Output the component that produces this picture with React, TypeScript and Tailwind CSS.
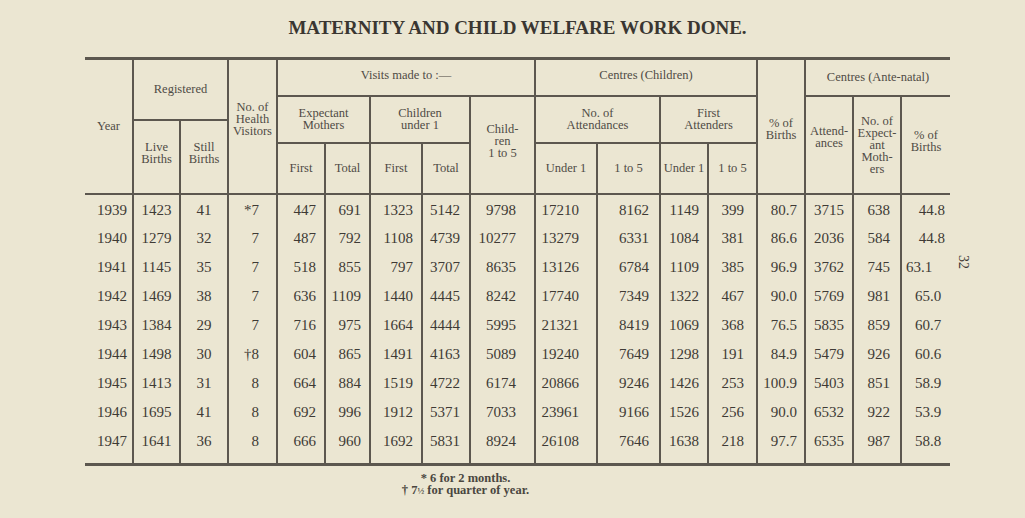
const rows: (string | number)[][] = [
  [1939, 1423, 41, "*7", 447, 691, 1323, 5142, 9798, 17210, 8162, 1149, 399, "80.7", 3715, 638, "44.8"],
  [1940, 1279, 32, 7, 487, 792, 1108, 4739, 10277, 13279, 6331, 1084, 381, "86.6", 2036, 584, "44.8"],
  [1941, 1145, 35, 7, 518, 855, 797, 3707, 8635, 13126, 6784, 1109, 385, "96.9", 3762, 745, "63.1"],
  [1942, 1469, 38, 7, 636, 1109, 1440, 4445, 8242, 17740, 7349, 1322, 467, "90.0", 5769, 981, "65.0"],
  [1943, 1384, 29, 7, 716, 975, 1664, 4444, 5995, 21321, 8419, 1069, 368, "76.5", 5835, 859, "60.7"],
  [1944, 1498, 30, "†8", 604, 865, 1491, 4163, 5089, 19240, 7649, 1298, 191, "84.9", 5479, 926, "60.6"],
  [1945, 1413, 31, 8, 664, 884, 1519, 4722, 6174, 20866, 9246, 1426, 253, "100.9", 5403, 851, "58.9"],
  [1946, 1695, 41, 8, 692, 996, 1912, 5371, 7033, 23961, 9166, 1526, 256, "90.0", 6532, 922, "53.9"],
  [1947, 1641, 36, 8, 666, 960, 1692, 5831, 8924, 26108, 7646, 1638, 218, "97.7", 6535, 987, "58.8"],
];

const widths = [48, 47, 48, 49, 48, 45, 52, 48, 65, 62, 63, 48, 49, 48, 48, 48, 49];

// per column alignment of the figures
const align = [
  "text-right pr-[5px]",
  "text-center",
  "text-center",
  "text-right pr-[17px]",
  "text-right pr-[8px]",
  "text-right pr-[8px]",
  "text-right pr-[8px]",
  "text-right pr-[9px]",
  "text-right pr-[18px]",
  "text-right pr-[17px]",
  "text-right pr-[10px]",
  "text-right pr-[8px]",
  "text-right pr-[12px]",
  "text-right pr-[7px]",
  "text-left pl-[8px]",
  "text-right pr-[10px]",
  "text-left pl-[11px]",
];

// the last column wanders a little in the print
const lastAlign = [
  "text-right pr-[5px]",
  "text-right pr-[5px]",
  "text-left pl-[4px]",
  "text-left pl-[13px]",
];

const line = "border-[#5c574f]";
const base = `border-b-2 ${line} font-normal align-middle text-center px-0`;
const th = `${base} border-l-2`;

export default function App() {
  return (
    <div
      className="relative h-[518px] w-[1025px] overflow-hidden bg-[#ebe6d2] text-[#3e3a35]"
      style={{ fontFamily: '"Liberation Serif", "DejaVu Serif", serif' }}
    >
      <h1 className="pt-[17px] pl-[85px] w-[950px] text-center text-[19px] font-bold leading-[22px] text-[#3a3631]">
        MATERNITY AND CHILD WELFARE WORK DONE.
      </h1>

      <div className="mt-[18px] flex items-center pl-[85px]">
        <table className="w-[865px] table-fixed border-collapse">
          <colgroup>
            {widths.map((w, i) => (
              <col key={i} style={{ width: w }} />
            ))}
          </colgroup>
          <thead className="text-[12.5px] leading-[12px] text-[#4f4b45]">
            <tr className="h-[37px]">
              <th rowSpan={4} className={`${base} border-t-[3px]`}>
                Year
              </th>
              <th rowSpan={2} colSpan={2} className={`${th} border-t-[3px]`}>
                Registered
              </th>
              <th rowSpan={4} className={`${th} border-t-[3px]`}>
                <div className="-mt-[14px]">
                  No. of
                  <br />
                  Health
                  <br />
                  Visitors
                </div>
              </th>
              <th colSpan={5} className={`${th} border-t-[3px] pb-[4px]`}>
                Visits made to :—
              </th>
              <th colSpan={4} className={`${th} border-t-[3px] pb-[4px]`}>
                Centres (Children)
              </th>
              <th rowSpan={4} className={`${th} border-t-[3px]`}>
                <div className="mt-[6px]">
                  % of
                  <br />
                  Births
                </div>
              </th>
              <th colSpan={3} className={`${th} border-t-[3px]`}>
                Centres (Ante-natal)
              </th>
            </tr>
            <tr className="h-[24px]">
              <th rowSpan={2} colSpan={2} className={th}>
                Expectant
                <br />
                Mothers
              </th>
              <th rowSpan={2} colSpan={2} className={th}>
                Children
                <br />
                under 1
              </th>
              <th rowSpan={3} className={th}>
                <div className="-mt-[8px]">
                  Child-
                  <br />
                  ren
                  <br />1 to 5
                </div>
              </th>
              <th rowSpan={2} colSpan={2} className={th}>
                No. of
                <br />
                Attendances
              </th>
              <th rowSpan={2} colSpan={2} className={th}>
                First
                <br />
                Attenders
              </th>
              <th rowSpan={3} className={th}>
                <div className="-mt-[16px]">
                  Attend-
                  <br />
                  ances
                </div>
              </th>
              <th rowSpan={3} className={th}>
                No. of
                <br />
                Expect-
                <br />
                ant
                <br />
                Moth-
                <br />
                ers
              </th>
              <th rowSpan={3} className={th}>
                <div className="-mt-[8px]">
                  % of
                  <br />
                  Births
                </div>
              </th>
            </tr>
            <tr className="h-[23px]">
              <th rowSpan={2} className={th}>
                <div className="-mt-[8px]">
                  Live
                  <br />
                  Births
                </div>
              </th>
              <th rowSpan={2} className={th}>
                <div className="-mt-[8px]">
                  Still
                  <br />
                  Births
                </div>
              </th>
            </tr>
            <tr className="h-[51px]">
              {["First", "Total", "First", "Total", "Under 1", "1 to 5", "Under 1", "1 to 5"].map((t, i) => (
                <th key={i} className={th}>
                  {t}
                </th>
              ))}
            </tr>
          </thead>
          <tbody className="text-[15px] leading-[16px]">
            {rows.map((r, ri) => (
              <tr key={ri} className={ri === 0 ? "h-[30px]" : "h-[29px]"}>
                {r.map((v, ci) => {
                  const a = ci === 16 ? lastAlign[Math.min(ri, 3)] : align[ci];
                  return (
                    <td
                      key={ci}
                      className={`${ci === 0 ? "" : `border-l-2 ${line}`} ${a} ${ri === 0 ? "pt-[1px]" : ""} whitespace-nowrap`}
                    >
                      {v}
                    </td>
                  );
                })}
              </tr>
            ))}
            <tr className="h-[9px]">
              {widths.map((_, ci) => (
                <td key={ci} className={`border-b-[3px] ${line} ${ci === 0 ? "" : "border-l-2"}`} />
              ))}
            </tr>
          </tbody>
        </table>
        <div className="ml-[6px] text-[14px] leading-[14px] [writing-mode:vertical-rl]">32</div>
      </div>

      <div className="mt-[6px] w-[865px] ml-[85px] pr-[104px] text-center text-[12.5px] font-bold leading-[12px] text-[#4a4640]">
        <div>* 6 for 2 months.</div>
        <div>
          † 7<span className="text-[9px]">½</span> for quarter of year.
        </div>
      </div>
    </div>
  );
}
